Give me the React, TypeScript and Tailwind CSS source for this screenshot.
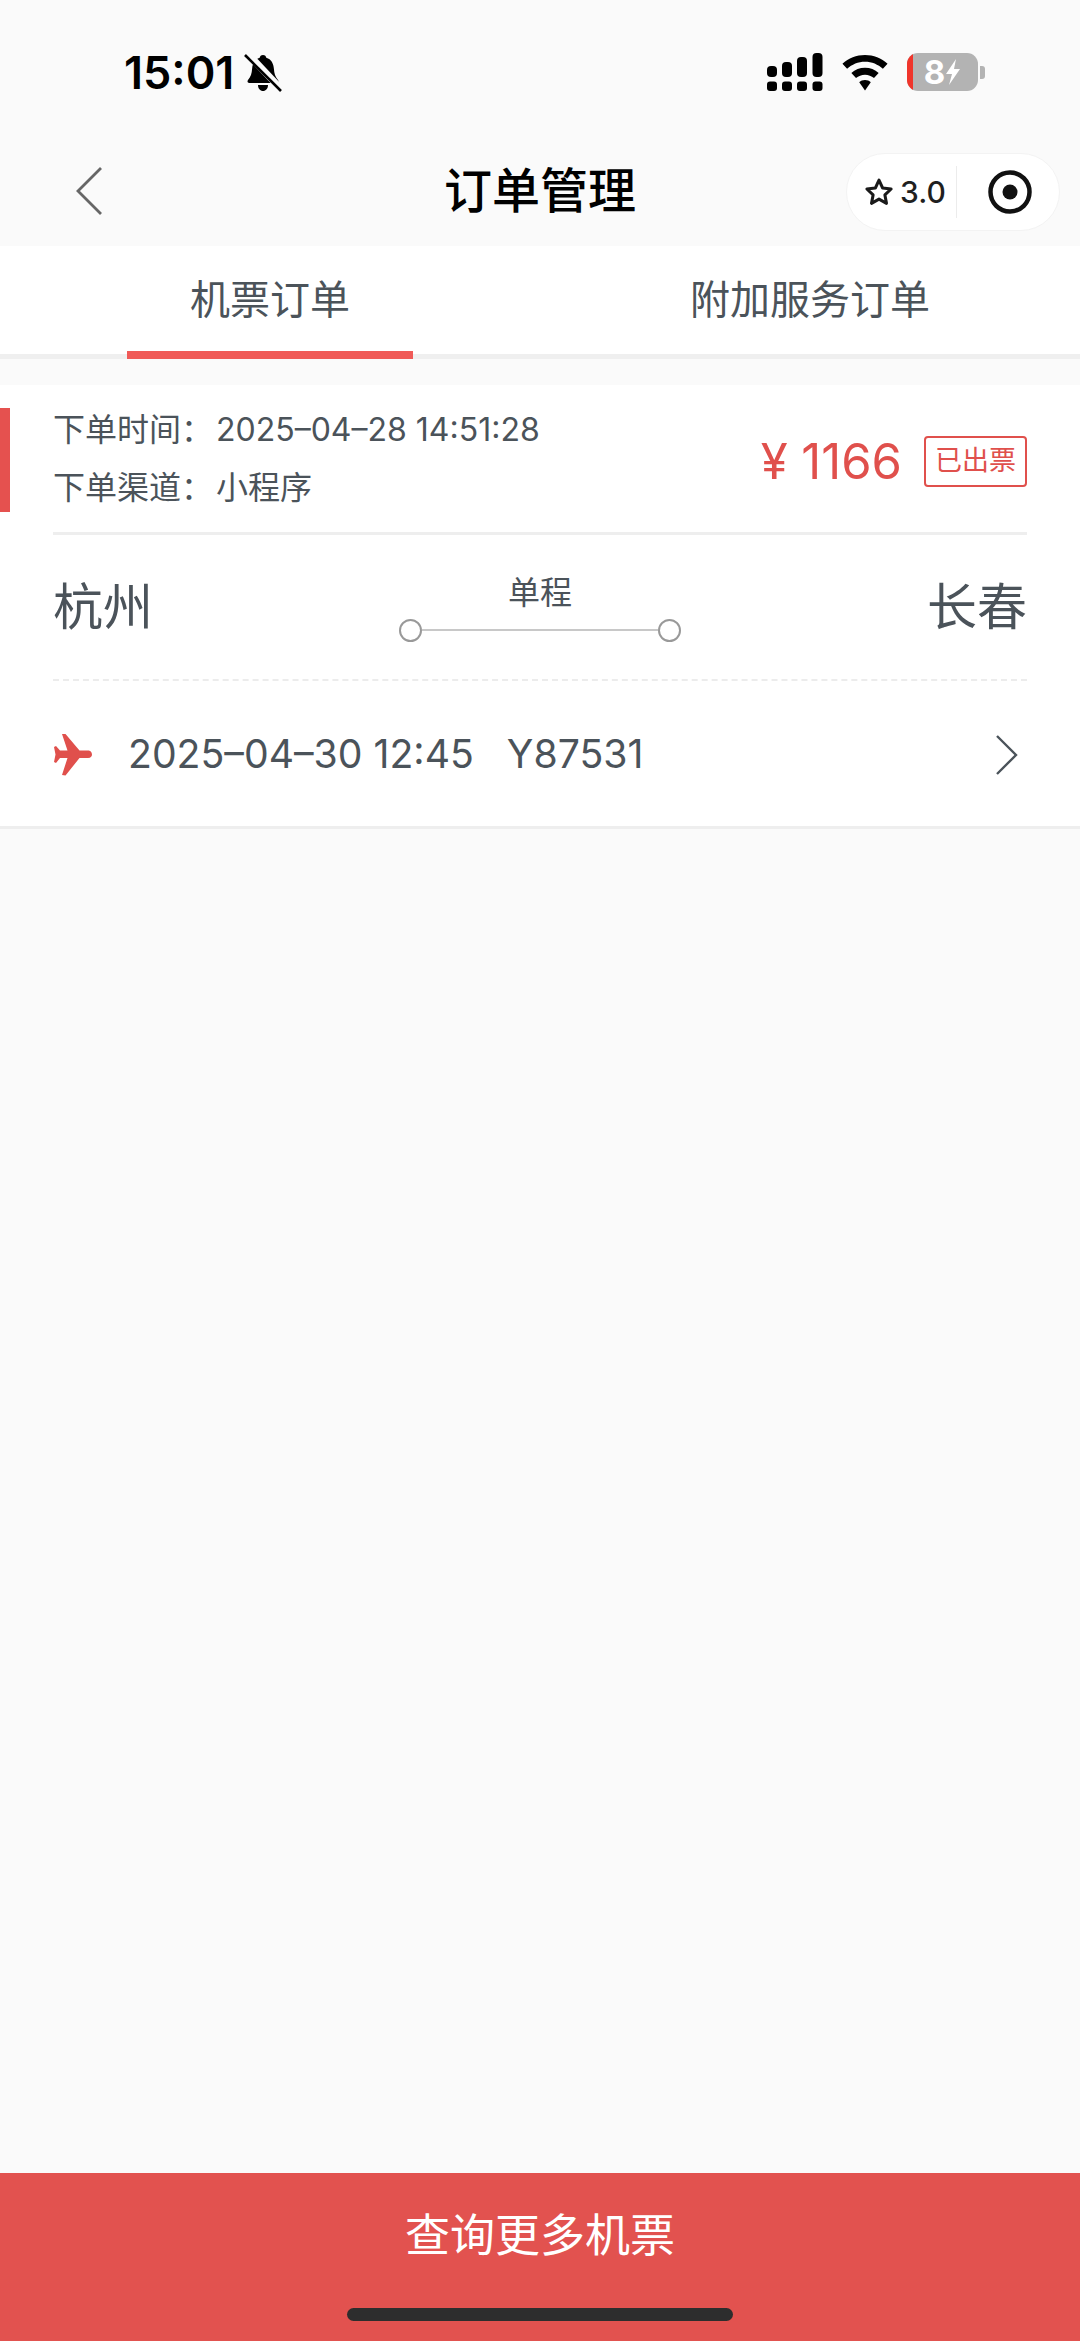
const FONT = "font-['Inter','Noto_Sans_CJK_SC',sans-serif]";

function MutedBell() {
  return (
    <svg width="38" height="38" viewBox="0 0 38 38">
      <path
        d="M19 1c2 0 3 1.300 3.300 2.800 5 1.500 7.200 5.800 7.600 11 .3 4.600 1.300 8 4.100 11.200 1 1.200.4 3-1.300 3H5.300c-1.700 0-2.300-1.800-1.300-3 2.800-3.200 3.800-6.600 4.100-11.200.4-5.200 2.600-9.500 7.600-11C16 2.300 17 1 19 1z"
        fill="#000"
      />
      <path d="M14 31h10c0 3.500-2.200 6-5 6s-5-2.500-5-6z" fill="#000" />
      <path d="M3 -1 L38 36" stroke="#fafafa" strokeWidth="7" />
      <path d="M1 1 L37 37" stroke="#000" strokeWidth="2.600" />
    </svg>
  );
}

function Signal() {
  return (
    <svg width="56" height="38" viewBox="0 0 56 38" fill="#000">
      <rect x="0" y="13" width="10" height="11" rx="4" />
      <rect x="15" y="9" width="10" height="15" rx="4" />
      <rect x="30" y="4" width="10" height="20" rx="4" />
      <rect x="45.500" y="0" width="10" height="24" rx="4" />
      <rect x="0" y="28.500" width="10" height="9.500" rx="3" />
      <rect x="15" y="28.500" width="10" height="9.500" rx="3" />
      <rect x="30" y="28.500" width="10" height="9.500" rx="3" />
      <rect x="45.500" y="28.500" width="10" height="9.500" rx="3" />
    </svg>
  );
}

function Wifi() {
  return (
    <svg className="mt-[2px]" width="48" height="36" viewBox="0 0 48 38" fill="#000">
      <path d="M24 0c9 0 17.400 3.500 23.800 9.200L42.900 14.600C37.800 10 31.200 7.200 24 7.200S10.200 10 5.100 14.600L.2 9.200C6.600 3.500 15 0 24 0z" />
      <path d="M24 13.500c5.500 0 10.500 2 14.400 5.400l-4.900 5.400c-2.600-2.200-5.900-3.500-9.500-3.500s-6.900 1.300-9.500 3.500L9.600 18.900c3.900-3.400 8.900-5.400 14.400-5.400z" />
      <path d="M24 26.500c2.400 0 4.500.8 6.100 2.200L24 37.500l-6.100-8.800c1.600-1.400 3.700-2.200 6.100-2.200z" />
    </svg>
  );
}

function Battery() {
  return (
    <div className="flex items-center">
      <div className="relative flex h-[38px] w-[71px] items-center justify-center overflow-hidden rounded-[11px] bg-[#b3b3b3]">
        <div className="absolute top-0 bottom-0 left-0 w-[6px] bg-[#f0352b]" />
        <span className="text-[33px] leading-none font-bold text-white">8</span>
        <svg width="16" height="26" viewBox="0 0 16 26" fill="#fff">
          <path d="M11 0 L1 15 H7 L4 26 L15 10 H9 Z" />
        </svg>
      </div>
      <div className="ml-[2px] h-[13px] w-[5px] rounded-r-[3px] bg-[#b3b3b3]" />
    </div>
  );
}

function StatusBar() {
  return (
    <div className="flex h-[148px] items-start pt-[53px] pr-[95px] pl-[124px]">
      <span className="text-[45px] leading-[40px] font-semibold text-black">15:01</span>
      <div className="mt-[1px] ml-[10px]">
        <MutedBell />
      </div>
      <div className="ml-auto flex items-start gap-[18px]">
        <Signal />
        <Wifi />
        <Battery />
      </div>
    </div>
  );
}

function NavBar() {
  return (
    <div className="grid h-[98px] grid-cols-3 items-start">
      <div className="pt-[18px] pl-[74px]">
        <svg width="30" height="50" viewBox="0 0 30 50" fill="none" stroke="#666" strokeWidth="2.800">
          <path d="M27 2 L4 25 L27 48" />
        </svg>
      </div>
      <div className="pt-[13px] text-center text-[48px] leading-[60px] font-medium text-black">订单管理</div>
      <div className="flex justify-end pt-[5px] pr-[20px]">
        <div className="flex h-[78px] w-[214px] items-center rounded-full border border-[#f3f3f3] bg-white pl-[17px]">
          <svg width="30" height="30" viewBox="0 0 24 24" fill="none" stroke="#1a1a1a" strokeWidth="2.400" strokeLinejoin="round">
            <path d="M12 2.500l2.900 6.300 6.800.8-5 4.700 1.300 6.800-6-3.400-6 3.400 1.300-6.800-5-4.700 6.800-.8z" />
          </svg>
          <span className="ml-[6px] text-[30px] leading-none font-medium text-[#1f1f1f]">3.0</span>
          <div className="ml-[10px] h-[52px] w-[1px] bg-[#ececec]" />
          <svg className="ml-[31px]" width="44" height="44" viewBox="0 0 44 44">
            <circle cx="22" cy="22" r="19.500" fill="none" stroke="#111" strokeWidth="4.500" />
            <circle cx="22" cy="22" r="7.500" fill="#111" />
          </svg>
        </div>
      </div>
    </div>
  );
}

function Tabs() {
  return (
    <div className="flex h-[113px] border-b-[5px] border-[#efefef] bg-white">
      <div className="relative flex w-1/2 justify-center pt-[26px] text-[40px] leading-[56px] text-[#4b535a]">
        机票订单
        <div className="absolute bottom-[-5px] left-[127px] h-[8px] w-[286px] bg-[#f05a57]" />
      </div>
      <div className="flex w-1/2 justify-center pt-[26px] text-[40px] leading-[56px] text-[#4b535a]">附加服务订单</div>
    </div>
  );
}

function OrderCard() {
  return (
    <div className="relative mt-[26px] border-b-[3px] border-[#eeeeee] bg-white px-[53px] pt-[16px]">
      <div className="absolute top-[23px] left-0 h-[104px] w-[10px] bg-[#e5514f]" />
      <div className="flex h-[134px] items-start border-b-[3px] border-[#eeeeee] text-[#4b535a]">
        <div className="flex flex-col text-[32px] leading-[58px]">
          <div className="flex">
            <span className="w-[163px]">下单时间：</span>
            <span>2025–04–28 14:51:28</span>
          </div>
          <div className="flex">
            <span className="w-[163px]">下单渠道：</span>
            <span>小程序</span>
          </div>
        </div>
        <div className="ml-auto flex items-center pt-[33px]">
          <span className="pt-[2px] text-[49px] leading-[52px] whitespace-pre text-[#e0504c]">¥ 1166</span>
          <span className="ml-[22px] flex h-[51px] w-[103px] items-center justify-center rounded-[4px] border-2 border-[#e0504c] text-[27px] text-[#e0504c]">
            已出票
          </span>
        </div>
      </div>
      <div className="flex h-[146px] items-center justify-between border-b-2 border-dashed border-[#ececec] text-[#4b535a]">
        <span className="text-[50px] leading-none">杭州</span>
        <div className="flex w-[282px] flex-col items-center">
          <span className="text-[32px] leading-[40px]">单程</span>
          <div className="mt-[6px] flex w-full items-center">
            <div className="h-[23px] w-[23px] rounded-full border-[2.500px] border-[#999999]" />
            <div className="h-[2px] flex-1 bg-[#c8c8c8]" />
            <div className="h-[23px] w-[23px] rounded-full border-[2.500px] border-[#999999]" />
          </div>
        </div>
        <span className="text-[50px] leading-none">长春</span>
      </div>
      <div className="flex h-[145px] items-center pt-[2px] text-[39.200px] text-[#4b535a]">
        <svg className="ml-[1px]" width="38" height="42" viewBox="0 0 38 42" fill="#e0504c">
          <path d="M8 0 L11.500 0 L25.500 16.500 L34 16.500 C37 16.500 38 19 38 20.500 C38 22 37 24 34 24 L25.500 24 L11.500 41.500 L8 41 L13.500 24 L6 24 L2 29 L0 28 L1.500 20.500 L0 13 L2 12 L6 16.500 L13.500 16.500 Z" />
        </svg>
        <span className="ml-[36px] whitespace-pre">2025–04–30 12:45   Y87531</span>
        <svg className="mr-[7px] ml-auto" width="26" height="44" viewBox="0 0 26 44" fill="none" stroke="#4b535a" strokeWidth="2.400">
          <path d="M3 3 L22 22 L3 41" />
        </svg>
      </div>
    </div>
  );
}

export default function App() {
  return (
    <div className={`flex h-[2341px] w-[1080px] flex-col overflow-hidden bg-[#fafafa] ${FONT}`}>
      <StatusBar />
      <NavBar />
      <Tabs />
      <OrderCard />
      <div className="flex-1" />
      <div className="flex h-[168px] flex-col items-center bg-[#e2524f]">
        <span className="pt-[33px] text-[45px] leading-[60px] text-white">查询更多机票</span>
        <div className="mt-[42px] h-[13px] w-[386px] rounded-full bg-[#2d2d2d]" />
      </div>
    </div>
  );
}
